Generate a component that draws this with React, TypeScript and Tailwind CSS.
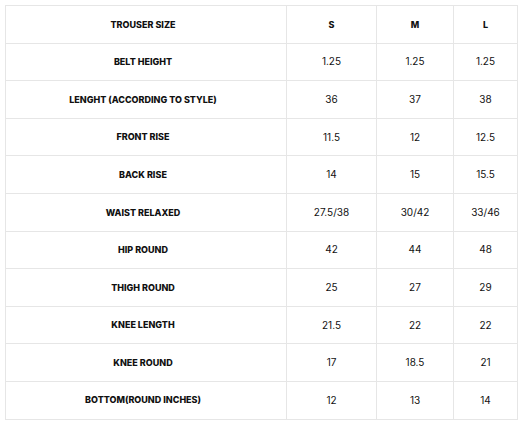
const rows: [string, string, string, string][] = [
  ["BELT HEIGHT", "1.25", "1.25", "1.25"],
  ["LENGHT (ACCORDING TO STYLE)", "36", "37", "38"],
  ["FRONT RISE", "11.5", "12", "12.5"],
  ["BACK RISE", "14", "15", "15.5"],
  ["WAIST RELAXED", "27.5/38", "30/42", "33/46"],
  ["HIP ROUND", "42", "44", "48"],
  ["THIGH ROUND", "25", "27", "29"],
  ["KNEE LENGTH", "21.5", "22", "22"],
  ["KNEE ROUND", "17", "18.5", "21"],
  ["BOTTOM(ROUND INCHES)", "12", "13", "14"],
];

export default function App() {
  return (
    <div className="w-[525px] h-[428px] bg-white pt-[5px] pl-[5px]" style={{ fontFamily: "Inter, 'Open Sans', sans-serif" }}>
      <table className="border-collapse w-[512px] table-fixed text-[#111]">
        <colgroup>
          <col className="w-[281px]" />
          <col className="w-[90px]" />
          <col className="w-[77px]" />
          <col className="w-[64px]" />
        </colgroup>
        <tbody>
          <tr className="h-[37.6px]">
            <td className="border border-[#e6e6e6] text-center text-[9px] font-extrabold pr-[6px]">TROUSER SIZE</td>
            <td className="border border-[#e6e6e6] text-center text-[9px] font-extrabold">S</td>
            <td className="border border-[#e6e6e6] text-center text-[9px] font-extrabold">M</td>
            <td className="border border-[#e6e6e6] text-center text-[9px] font-extrabold">L</td>
          </tr>
          {rows.map((r) => (
            <tr key={r[0]} className="h-[37.6px]">
              <td className="border border-[#e6e6e6] text-center text-[9px] font-extrabold pr-[6px]">{r[0]}</td>
              <td className="border border-[#e6e6e6] text-center text-[10px]">{r[1]}</td>
              <td className="border border-[#e6e6e6] text-center text-[10px]">{r[2]}</td>
              <td className="border border-[#e6e6e6] text-center text-[10px]">{r[3]}</td>
            </tr>
          ))}
        </tbody>
      </table>
    </div>
  );
}
